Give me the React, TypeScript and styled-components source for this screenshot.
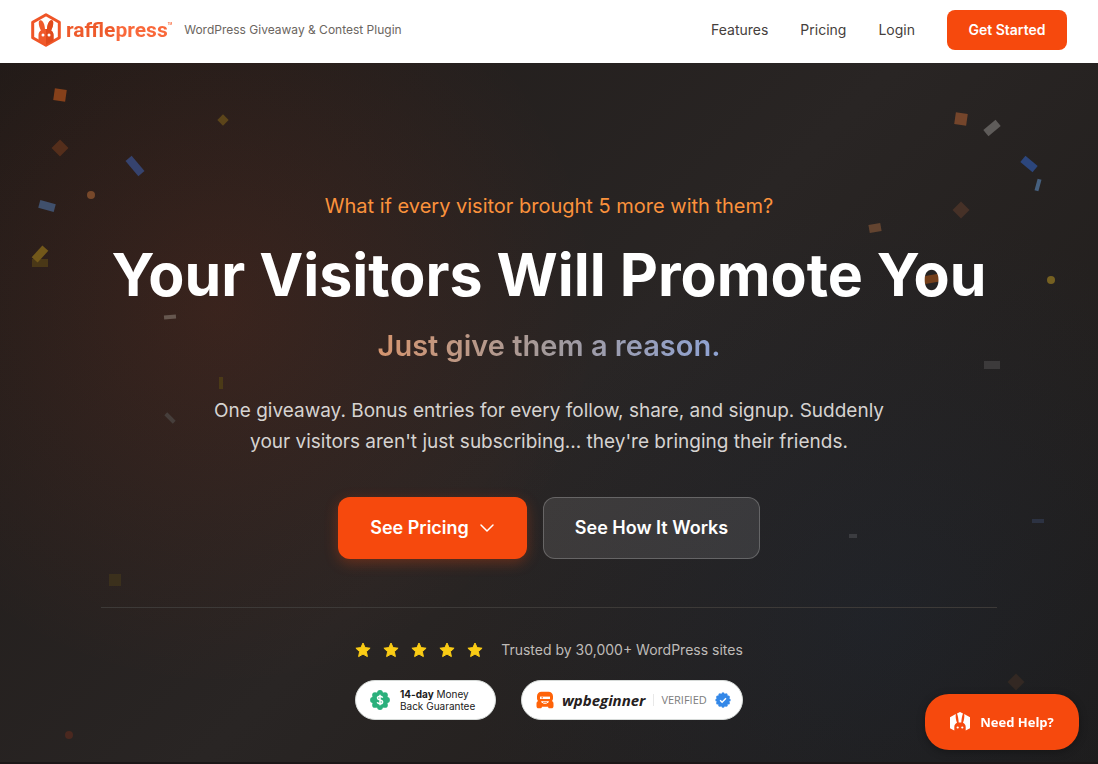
import React from 'react';
import styled, { createGlobalStyle, css } from 'styled-components';

const sans = "Inter, 'Liberation Sans', sans-serif";
const humanist = "'Open Sans', 'Noto Sans', sans-serif";
const brand = '#f6490d';

const GlobalStyle = createGlobalStyle`
  *, *::before, *::after { box-sizing: border-box; }
  body { margin: 0; background: #26211f; font-family: ${sans}; -webkit-font-smoothing: antialiased; }
  h1, p { margin: 0; }
  a { color: inherit; text-decoration: none; }
`;

const Page = styled.div`
  display: flex;
  flex-direction: column;
  min-height: 100vh;
`;

const Header = styled.header`
  display: flex;
  align-items: center;
  justify-content: space-between;
  min-height: 63px;
  padding: 0 31px 3px 30px;
  background: #fff;
`;

const Brand = styled.div`
  display: flex;
  align-items: center;
  gap: 12px;
`;

const LogoLink = styled.a`
  display: flex;
  align-items: center;
  gap: 4px;
`;

const Wordmark = styled.span`
  display: flex;
  font-family: Roboto, sans-serif;
  font-size: 21px;
  line-height: 24px;
  font-weight: 700;
  background: linear-gradient(90deg, #ee5a2b 0 46%, #f9683a 46%);
  background-clip: text;
  color: transparent;
`;

const Trademark = styled.small`
  font-size: 3px;
  line-height: 12px;
`;

const Tagline = styled.span`
  color: #6b6560;
  font-size: 12px;
  line-height: 16px;
`;

const Nav = styled.nav`
  display: flex;
  align-items: center;
  gap: 32px;
  color: #45403c;
  font-size: 14px;
  line-height: 20px;
`;

const NavButton = styled.button`
  min-width: 120px;
  height: 40px;
  padding: 0 20px;
  border: 0;
  border-radius: 8px;
  background: ${brand};
  color: #fff;
  font: 600 14px/20px ${sans};
`;

const Hero = styled.main`
  position: relative;
  flex: 1;
  display: flex;
  justify-content: center;
  overflow: hidden;
  padding: 129px 32px 42px;
  border-bottom: 2px solid #1c1718;
  background:
    radial-gradient(circle at 20% 35%, rgba(249, 70, 22, 0.1), transparent 380px),
    radial-gradient(circle at 80% 80%, rgba(20, 60, 110, 0.13), transparent 420px),
    linear-gradient(135deg, #1f1a18 0%, #292524 50%, #1e1b19 100%);
`;

const Content = styled.div`
  position: relative;
  display: flex;
  flex-direction: column;
  align-items: center;
  width: 100%;
  max-width: 896px;
  text-align: center;
`;

const Eyebrow = styled.p`
  color: #fb923c;
  font-size: 20px;
  line-height: 28px;
`;

const Title = styled.h1`
  margin-top: 20px;
  color: #fff;
  font-size: 59px;
  line-height: 70px;
  font-weight: 700;
`;

const Subtitle = styled.p`
  margin-top: 16px;
  background: linear-gradient(90deg, #d5956f, #a39a9b 50%, #8fa3d4);
  background-clip: text;
  color: transparent;
  font-size: 29px;
  line-height: 40px;
  font-weight: 600;
`;

const Lead = styled.p`
  max-width: 680px;
  margin-top: 29px;
  color: #d6d3d1;
  font-size: 19px;
  line-height: 31px;
`;

const Actions = styled.div`
  display: flex;
  flex-wrap: wrap;
  justify-content: center;
  gap: 16px;
  margin-top: 40px;
`;

const Action = styled.a<{ $primary?: boolean }>`
  display: flex;
  align-items: center;
  justify-content: center;
  gap: 10px;
  min-width: ${p => (p.$primary ? 189 : 217)}px;
  height: 62px;
  padding: 0 30px;
  border-radius: 12px;
  color: #fff;
  font-size: 18px;
  line-height: 28px;
  font-weight: 600;
  ${p => p.$primary
    ? css`
        background: ${brand};
        box-shadow: 0 4px 14px rgba(246, 73, 13, 0.3);
      `
    : css`
        border: 1px solid rgba(255, 255, 255, 0.22);
        background: rgba(255, 255, 255, 0.1);
      `}
`;

const Proof = styled.section`
  display: flex;
  flex-direction: column;
  align-items: center;
  gap: 18px;
  width: 100%;
  margin-top: 48px;
  padding-top: 30px;
  border-top: 1px solid #3d3a38;
`;

const Rating = styled.div`
  display: flex;
  align-items: center;
  gap: 18px;
  color: #bfbbb8;
  font-size: 14px;
  line-height: 24px;
`;

const Stars = styled.div`
  display: flex;
  gap: 12px;
`;

const Badges = styled.div`
  display: flex;
  gap: 25px;
`;

const Badge = styled.div<{ $wide?: boolean }>`
  display: flex;
  align-items: center;
  gap: ${p => (p.$wide ? 8 : 10)}px;
  min-width: ${p => (p.$wide ? 222 : 141)}px;
  height: 40px;
  padding: 0 ${p => (p.$wide ? 10 : 14)}px 0 14px;
  border: 1px solid #d6dad8;
  border-radius: 20px;
  background: #fff;
`;

const Guarantee = styled.span`
  color: #1a1a1a;
  font-size: 10px;
  line-height: 12px;
  text-align: left;
`;

const WpName = styled.span`
  color: #25201d;
  font: italic 700 15px/20px ${humanist};
`;

const Verified = styled.span`
  padding-left: 7px;
  border-left: 1px solid #e8e8e8;
  color: #7c7c7c;
  font: 400 11px/12px ${humanist};
`;

const Help = styled.button`
  position: fixed;
  right: 19px;
  bottom: 14px;
  display: flex;
  align-items: center;
  justify-content: center;
  gap: 10px;
  width: 154px;
  height: 56px;
  border: 0;
  border-radius: 24px;
  background: ${brand};
  box-shadow: 0 2px 8px rgba(0, 0, 0, 0.3);
  color: #fff;
  font: 700 13px/20px ${humanist};
`;

type Side = 'left' | 'right';

const Piece = styled.span<{
  $side: Side; $x: number; $y: number; $w: number; $h: number;
  $turn: number; $color: string; $round?: boolean;
}>`
  position: absolute;
  ${p => p.$side}: ${p => p.$x}px;
  top: ${p => p.$y}px;
  width: ${p => p.$w}px;
  height: ${p => p.$h}px;
  border-radius: ${p => (p.$round ? '50%' : '0')};
  background: ${p => p.$color};
  transform: rotate(${p => p.$turn}deg);
`;

/* side, edge offset, top, width, height, rotation, colour, round */
const confetti: [Side, number, number, number, number, number, string, boolean?][] = [
  ['left', 54, 26, 12, 12, 8, '#85401a'],
  ['left', 219, 53, 8, 8, 45, '#5c451a'],
  ['left', 54, 79, 12, 12, 45, '#542e1b'],
  ['left', 131, 93, 8, 20, -40, '#36436e'],
  ['left', 87, 128, 8, 8, 0, '#77482a', true],
  ['left', 39, 139, 16, 8, 15, '#40506c'],
  ['left', 32, 196, 16, 8, 0, '#4a3817'],
  ['left', 32, 187, 16, 8, -48, '#72581a'],
  ['left', 164, 252, 12, 4, -5, '#66574f'],
  ['left', 219, 314, 4, 12, 0, '#4b3a17'],
  ['left', 164, 353, 12, 4, 45, '#463e3b'],
  ['left', 109, 511, 12, 12, 0, '#3b301c'],
  ['left', 65, 668, 8, 8, 0, '#4a281f', true],
  ['right', 131, 50, 12, 12, 8, '#74452b'],
  ['right', 98, 61, 16, 8, -40, '#5f5c5a'],
  ['right', 61, 97, 16, 8, 40, '#2c467c'],
  ['right', 58, 116, 4, 12, 15, '#46607e'],
  ['right', 131, 141, 12, 12, 45, '#463127'],
  ['right', 217, 161, 12, 8, -10, '#634430'],
  ['right', 159, 212, 16, 8, -10, '#743f1b'],
  ['right', 43, 213, 8, 8, 0, '#756021', true],
  ['right', 98, 298, 16, 8, 0, '#3c3a3b'],
  ['right', 54, 456, 12, 4, 0, '#2c3242'],
  ['right', 241, 471, 8, 4, 0, '#3b3c40'],
  ['right', 76, 613, 12, 12, 45, '#332823'],
];

const RabbitLogo = () => (
  <svg width="32" height="34" viewBox="0 0 32 34" aria-hidden="true">
    <path d="M16 1.800 29.300 9.300v15.400L16 32.200 2.700 24.700V9.300Z" fill="#fff" stroke="#ef5527" strokeWidth="3" strokeLinejoin="round" />
    <path d="M8.500 22c0-2.200 1-3.800 2.400-4.600C9.400 14.500 8.600 11.600 8.800 9.200c.2-2 2.300-2.500 3.700-1 1.500 1.700 2.300 4.500 2.500 7.800h2c.2-3.300 1-6.100 2.500-7.800 1.400-1.500 3.500-1 3.700 1 .2 2.400-.6 5.300-2.100 8.200 1.400.8 2.400 2.400 2.400 4.600v5.500L16 32l-7.500-4.500Z" fill="#f05a2b" />
    <path d="M16 16h1c.2-3.300 1-6.100 2.500-7.800 1.400-1.500 3.500-1 3.700 1 .2 2.400-.6 5.300-2.100 8.200 1.400.8 2.400 2.400 2.400 4.600v5.500L16 32Z" fill="#e04a1c" />
    <circle cx="13" cy="22" r="1.500" fill="#fff" />
    <circle cx="19" cy="22" r="1.500" fill="#fff" />
  </svg>
);

const HelpIcon = () => (
  <svg width="20" height="20" viewBox="0 0 20 20" aria-hidden="true">
    <path d="M0 5.300 5.800 2C5.400 5 5.900 8.200 7 10.800c-1.700.9-2.700 2.300-2.700 4.200v3.500L0 16.300Z M20 5.300 14.200 2c.4 3-.1 6.200-1.200 8.800 1.700.9 2.700 2.300 2.700 4.200v3.500l4.300-2.200Z M7 1.500 10 0l3 1.500c-1 2.500-1.500 5.500-1.700 9H8.700C8.500 7 8 4 7 1.500Z" fill="#fff" />
    <circle cx="7.700" cy="15.500" r="1.100" fill="#fff" />
    <circle cx="12.300" cy="15.500" r="1.100" fill="#fff" />
  </svg>
);

const Star = () => (
  <svg width="16" height="16" viewBox="0 0 16 16" aria-hidden="true">
    <path d="m8 1 2.100 4.600 5 .6-3.700 3.400 1 5L8 12.100l-4.400 2.500 1-5L.9 6.200l5-.6Z" fill="#facc15" stroke="#facc15" strokeLinejoin="round" />
  </svg>
);

const Chevron = () => (
  <svg width="16" height="16" viewBox="0 0 16 16" aria-hidden="true">
    <path d="m2 5 6 6 6-6" fill="none" stroke="#fff" strokeWidth="1.500" strokeLinecap="round" strokeLinejoin="round" />
  </svg>
);

const scallops = (cx: number, cy: number, count: number, ring: number, r: number) =>
  Array.from({ length: count }, (_, i) => {
    const a = (i / count) * Math.PI * 2;
    return <circle key={i} cx={cx + Math.cos(a) * ring} cy={cy + Math.sin(a) * ring} r={r} />;
  });

const MoneySeal = () => (
  <svg width="20" height="20" viewBox="0 0 20 20" aria-hidden="true">
    <g fill="#2bb07c">
      <circle cx="10" cy="10" r="8" />
      {scallops(10, 10, 8, 7, 2.900)}
    </g>
    <path d="M12.600 7.700C12.300 6.700 11.300 6.200 10 6.200c-1.500 0-2.500.7-2.500 1.800 0 2.700 5.100 1.200 5.100 4 0 1.100-1.100 1.800-2.600 1.800-1.400 0-2.400-.6-2.700-1.700M10 4.700v10.600" fill="none" stroke="#fff" strokeWidth="1.500" />
  </svg>
);

const WpMascot = () => (
  <svg width="18" height="18" viewBox="0 0 18 18" aria-hidden="true">
    <path d="M5.500.8h7A4.500 4.500 0 0 1 17 5.300v1.900c0 1.200-.4 2-1.100 2.700 1 .5 1.600 1.400 1.600 2.800V15c0 1.400-.8 2.300-2 2.300h-1.800c-1 0-1.600-.7-1.600-1.600H5.900c0 .9-.6 1.600-1.600 1.600H2.500c-1.200 0-2-.9-2-2.300v-2.300c0-1.400.6-2.300 1.600-2.800C1.400 9.200 1 8.400 1 7.200V5.300A4.500 4.500 0 0 1 5.500.8Z" fill="#ff6308" />
    <path d="M4 5.600h10v2.400H4Z" fill="#fff" />
    <path d="M5.500 6.800h1.500" stroke="#ff6308" />
    <path d="M5.500 10.800c1.400 2 5.600 2 7 0Z" fill="#fff" stroke="#fff" strokeLinejoin="round" />
    <path d="M7 11.400h4" stroke="#ff6308" strokeWidth=".7" />
  </svg>
);

const VerifiedSeal = () => (
  <svg width="16" height="16" viewBox="0 0 16 16" aria-hidden="true">
    <g fill="#3488e8">
      <circle cx="8" cy="8" r="6.500" />
      {scallops(8, 8, 12, 6.200, 1.500)}
    </g>
    <path d="m5.100 8.200 2 2 3.900-4" fill="none" stroke="#fff" strokeWidth="1.400" />
  </svg>
);

export default function App() {
  return (
    <Page>
      <GlobalStyle />
      <Header>
        <Brand>
          <LogoLink href="#" aria-label="RafflePress home">
            <RabbitLogo />
            <Wordmark>rafflepress<Trademark>TM</Trademark></Wordmark>
          </LogoLink>
          <Tagline>WordPress Giveaway &amp; Contest Plugin</Tagline>
        </Brand>
        <Nav>
          <a href="#features">Features</a>
          <a href="#pricing">Pricing</a>
          <a href="#login">Login</a>
          <NavButton>Get Started</NavButton>
        </Nav>
      </Header>
      <Hero>
        {confetti.map(([side, x, y, w, h, turn, color, round], i) => (
          <Piece key={i} $side={side} $x={x} $y={y} $w={w} $h={h} $turn={turn} $color={color} $round={round} />
        ))}
        <Content>
          <Eyebrow>What if every visitor brought 5 more with them?</Eyebrow>
          <Title>Your Visitors Will Promote You</Title>
          <Subtitle>Just give them a reason.</Subtitle>
          <Lead>
            One giveaway. Bonus entries for every follow, share, and signup. Suddenly
            your visitors aren't just subscribing... they're bringing their friends.
          </Lead>
          <Actions>
            <Action href="#pricing" $primary>See Pricing <Chevron /></Action>
            <Action href="#how">See How It Works</Action>
          </Actions>
          <Proof>
            <Rating>
              <Stars role="img" aria-label="Five stars">
                <Star /><Star /><Star /><Star /><Star />
              </Stars>
              <span>Trusted by 30,000+ WordPress sites</span>
            </Rating>
            <Badges>
              <Badge>
                <MoneySeal />
                <Guarantee><b>14-day</b> Money<br />Back Guarantee</Guarantee>
              </Badge>
              <Badge $wide>
                <WpMascot />
                <WpName>wpbeginner</WpName>
                <Verified>VERIFIED</Verified>
                <VerifiedSeal />
              </Badge>
            </Badges>
          </Proof>
        </Content>
      </Hero>
      <Help><HelpIcon />Need Help?</Help>
    </Page>
  );
}
